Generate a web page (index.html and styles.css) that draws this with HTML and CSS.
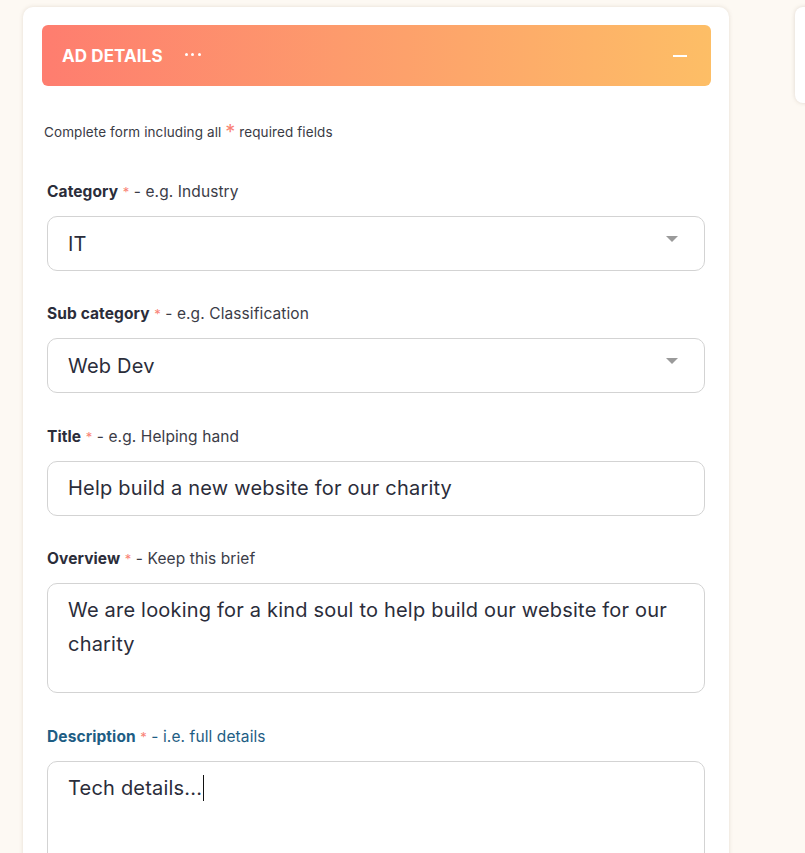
FILE: index.html
```html
<!DOCTYPE html>
<html>
<head>
<meta charset="utf-8">
<link rel="stylesheet" href="styles.css">
</head>
<body>
<div class="page">
  <section class="card">
    <div class="header">
      <div class="header-left">
        <span class="header-title">AD DETAILS</span>
        <span class="dots"><i></i><i></i><i></i></span>
      </div>
      <span class="minus"></span>
    </div>
    <p class="note">Complete form including all <span class="star-big">*</span> required fields</p>
    <div class="form">
      <div class="field">
        <div class="label"><b>Category</b> <span class="star">*</span> - e.g. Industry</div>
        <div class="input select"><span>IT</span><span class="caret"></span></div>
      </div>
      <div class="field">
        <div class="label"><b>Sub category</b> <span class="star">*</span> - e.g. Classification</div>
        <div class="input select"><span>Web Dev</span><span class="caret"></span></div>
      </div>
      <div class="field">
        <div class="label"><b>Title</b> <span class="star">*</span> - e.g. Helping hand</div>
        <div class="input"><span>Help build a new website for our charity</span></div>
      </div>
      <div class="field">
        <div class="label"><b>Overview</b> <span class="star">*</span> - Keep this brief</div>
        <div class="input area">We are looking for a kind soul to help build our website for our charity</div>
      </div>
      <div class="field">
        <div class="label active"><b>Description</b> <span class="star">*</span> - i.e. full details</div>
        <div class="input area tall">Tech details...<span class="cursor"></span></div>
      </div>
    </div>
  </section>
  <aside class="side-card"></aside>
</div>
</body>
</html>
```
FILE: styles.css
```css
html, body {
  margin: 0;
  padding: 0;
  background: #fdf9f3;
  font-family: "Inter", "Noto Sans", sans-serif;
  color: #2b2d3a;
  overflow: hidden;
}
.page {
  display: flex;
  align-items: flex-start;
  gap: 66px;
  padding: 7px 0 0 23px;
  width: 1200px;
}
.card {
  flex: 0 0 706px;
  height: 900px;
  background: #fff;
  border-radius: 10px;
  box-shadow: 0 0 4px rgba(120, 100, 80, 0.18);
}
.side-card {
  flex: 0 0 300px;
  height: 96px;
  background: #fff;
  border-radius: 8px;
  box-shadow: 0 0 4px rgba(120, 100, 80, 0.22);
}
.header {
  margin: 18px 18px 0 19px;
  height: 61px;
  border-radius: 6px;
  background: linear-gradient(90deg, #fe7d6f 0%, #fd9b6c 45%, #fdbe66 100%);
  display: flex;
  align-items: center;
  justify-content: space-between;
  padding: 0 24px 0 20px;
  box-sizing: border-box;
}
.header-left {
  display: flex;
  align-items: center;
  gap: 22px;
}
.header-title {
  color: #fff;
  font-weight: 700;
  font-size: 17px;
  letter-spacing: 0.1px;
}
.dots {
  display: flex;
  gap: 3.5px;
  margin-top: -2px;
}
.dots i {
  width: 3px;
  height: 3px;
  border-radius: 50%;
  background: #fff;
  display: block;
}
.minus {
  width: 14px;
  height: 2px;
  background: #fff;
  display: block;
}
.note {
  margin: 36px 0 0 21px;
  font-size: 13.5px;
  color: #3a3b45;
  letter-spacing: 0.1px;
  line-height: 20px;
}
.star-big {
  color: #f98274;
  font-size: 20px;
  vertical-align: -2px;
}
.form {
  padding: 0 24px 0 24px;
  margin-top: 40px;
  display: flex;
  flex-direction: column;
  gap: 33.4px;
}
.field {
  display: flex;
  flex-direction: column;
  gap: 14px;
}
.label {
  font-size: 15.5px;
  line-height: 20px;
  color: #3b3c47;
  letter-spacing: 0.1px;
}
.label b {
  font-weight: 700;
  color: #2b2d3a;
}
.label .star {
  color: #f98274;
  font-size: 13px;
}
.label.active, .label.active b {
  color: #1e5d84;
}
.input {
  height: 55px;
  box-sizing: border-box;
  border: 1px solid #d3d3d3;
  border-radius: 10px;
  padding: 0 20px;
  display: flex;
  align-items: center;
  font-size: 20px;
  color: #2b2d3a;
  letter-spacing: 0.2px;
}
.select {
  justify-content: space-between;
  padding-right: 26px;
}
.caret {
  width: 0;
  height: 0;
  border-left: 6px solid transparent;
  border-right: 6px solid transparent;
  border-top: 6px solid #9a9a9a;
  margin-top: -10px;
}
.area {
  display: block;
  height: 110px;
  padding-top: 9px;
  line-height: 34px;
}
.tall {
  height: 140px;
}
.cursor {
  display: inline-block;
  width: 1px;
  height: 26px;
  background: #111;
  vertical-align: -6px;
  margin-left: 1px;
}
```
